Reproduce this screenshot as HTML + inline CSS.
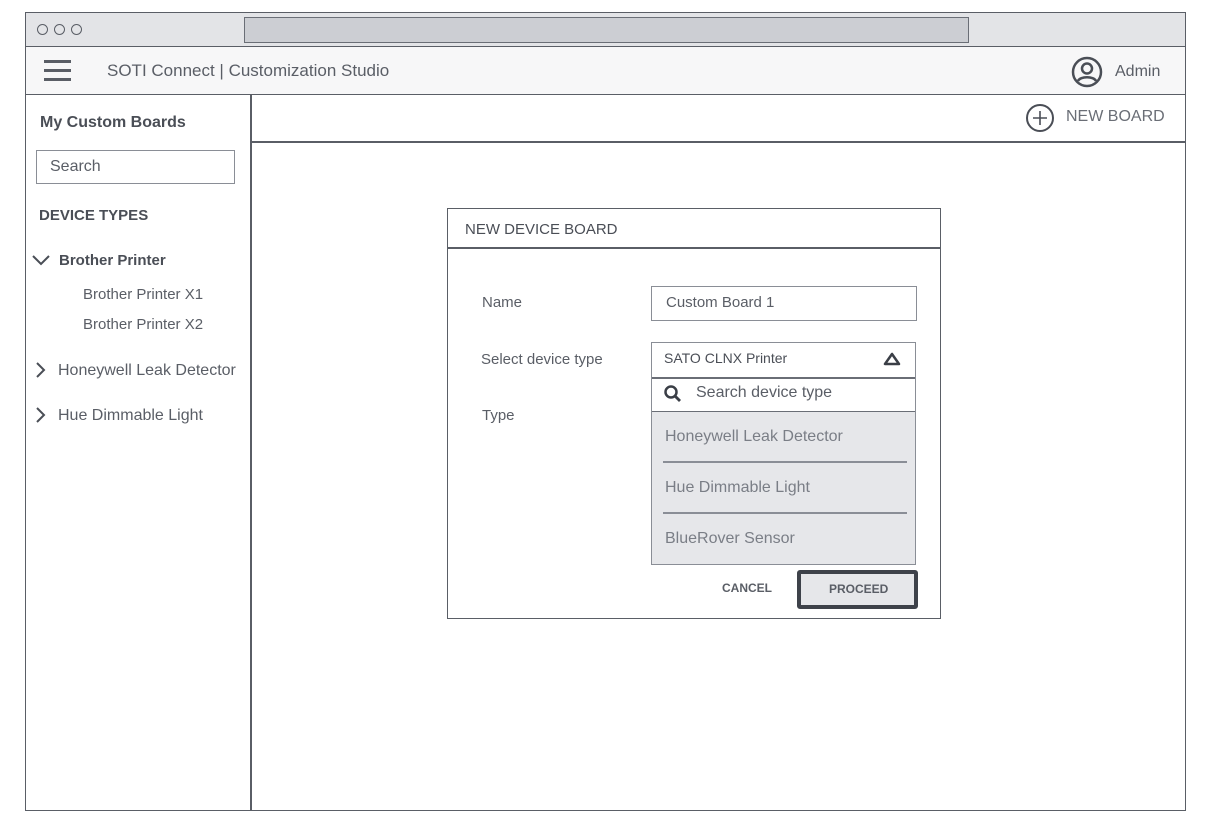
<!DOCTYPE html>
<html><head><style>
*{box-sizing:border-box;margin:0;padding:0}
body{width:1214px;height:836px;background:#fff;font-family:"Liberation Sans",sans-serif;color:#555a63;position:relative;overflow:hidden}
.a{position:absolute}
.t{position:absolute;white-space:nowrap}
</style></head><body>
<div class="a" style="left:25px;top:12px;width:1161px;height:799px;border:1.5px solid #5a5e66"></div>
<div class="a" style="left:26px;top:13px;width:1159px;height:34px;background:#e3e4e7;border-bottom:1.5px solid #5a5e66"></div>
<div class="a" style="left:37px;top:24px;width:11px;height:11px;border:1.5px solid #5a5e66;border-radius:50%"></div>
<div class="a" style="left:54px;top:24px;width:11px;height:11px;border:1.5px solid #5a5e66;border-radius:50%"></div>
<div class="a" style="left:71px;top:24px;width:11px;height:11px;border:1.5px solid #5a5e66;border-radius:50%"></div>
<div class="a" style="left:244px;top:17px;width:725px;height:26px;background:#ccced3;border:1.5px solid #6a6e76"></div>
<div class="a" style="left:26px;top:47px;width:1159px;height:48px;background:#f7f7f8;border-bottom:1.5px solid #5a5e66"></div>
<div class="a" style="left:44px;top:60px;width:27px;height:3px;background:#5a5e66"></div>
<div class="a" style="left:44px;top:69px;width:27px;height:3px;background:#5a5e66"></div>
<div class="a" style="left:44px;top:78px;width:27px;height:3px;background:#5a5e66"></div>
<div class="t" style="left:107px;top:61px;font-size:17px;color:#5a5e66">SOTI Connect | Customization Studio</div>
<svg class="a" style="left:1071px;top:56px" width="32" height="32" viewBox="0 0 32 32"><circle cx="16" cy="16" r="14" fill="none" stroke="#4a4e56" stroke-width="2.5"/><circle cx="16" cy="12.5" r="5" fill="none" stroke="#4a4e56" stroke-width="2.5"/><path d="M7 25c2-5 16-5 18 0" fill="none" stroke="#4a4e56" stroke-width="2.5"/></svg>
<div class="t" style="left:1115px;top:63px;font-size:16px;color:#5a5e66">Admin</div>
<div class="a" style="left:250px;top:95px;width:1.5px;height:715px;background:#5a5e66"></div>
<div class="a" style="left:251px;top:141px;width:934px;height:1.5px;background:#5a5e66"></div>
<svg class="a" style="left:1024px;top:103px" width="32" height="30" viewBox="0 0 32 30"><circle cx="16" cy="15" r="13" fill="none" stroke="#4a4e56" stroke-width="2"/><path d="M16 8v14M9 15h14" stroke="#4a4e56" stroke-width="1.6"/></svg>
<div class="t" style="left:1066px;top:108px;font-size:16px;color:#6a6e76">NEW BOARD</div>
<div class="t" style="left:40px;top:114px;font-size:16px;font-weight:bold;color:#4a4e56">My Custom Boards</div>
<div class="a" style="left:36px;top:150px;width:199px;height:34px;border:1.5px solid #8a8e96"></div>
<div class="t" style="left:50px;top:158px;font-size:16px;color:#5a5e66">Search</div>
<div class="t" style="left:39px;top:207px;font-size:15px;font-weight:bold;color:#4a4e56">DEVICE TYPES</div>
<svg class="a" style="left:31px;top:253px" width="20" height="14"><path d="M2 3l8 8 8-8" fill="none" stroke="#4a4e56" stroke-width="2"/></svg>
<div class="t" style="left:59px;top:252px;font-size:15px;font-weight:bold;color:#4a4e56">Brother Printer</div>
<div class="t" style="left:83px;top:286px;font-size:15px;color:#5a5e66">Brother Printer X1</div>
<div class="t" style="left:83px;top:316px;font-size:15px;color:#5a5e66">Brother Printer X2</div>
<svg class="a" style="left:34px;top:361px" width="14" height="18"><path d="M3 2l7 7-7 7" fill="none" stroke="#4a4e56" stroke-width="2"/></svg>
<div class="t" style="left:58px;top:362px;font-size:16px;color:#5a5e66">Honeywell Leak Detector</div>
<svg class="a" style="left:34px;top:406px" width="14" height="18"><path d="M3 2l7 7-7 7" fill="none" stroke="#4a4e56" stroke-width="2"/></svg>
<div class="t" style="left:58px;top:407px;font-size:16px;color:#5a5e66">Hue Dimmable Light</div>
<div class="a" style="left:447px;top:208px;width:494px;height:411px;border:1.5px solid #5a5e66"></div>
<div class="a" style="left:448px;top:247px;width:492px;height:1.5px;background:#5a5e66"></div>
<div class="t" style="left:465px;top:221px;font-size:15px;color:#4a4e56">NEW DEVICE BOARD</div>
<div class="t" style="left:482px;top:294px;font-size:15px;color:#5a5e66">Name</div>
<div class="a" style="left:651px;top:286px;width:266px;height:35px;border:1.5px solid #8a8e96"></div>
<div class="t" style="left:666px;top:294px;font-size:15px;color:#5a5e66">Custom Board 1</div>
<div class="t" style="left:481px;top:351px;font-size:15px;color:#5a5e66">Select device type</div>
<div class="t" style="left:482px;top:407px;font-size:15px;color:#5a5e66">Type</div>
<div class="a" style="left:651px;top:342px;width:265px;height:223px;border:1.5px solid #8a8e96;background:#e6e7ea"></div>
<div class="a" style="left:652px;top:343px;width:263px;height:69px;background:#fff;border-bottom:1.5px solid #6a6e76"></div>
<div class="a" style="left:652px;top:377px;width:263px;height:1.5px;background:#6a6e76"></div>
<div class="t" style="left:664px;top:350px;font-size:14px;color:#4a4e56">SATO CLNX Printer</div>
<svg class="a" style="left:883px;top:352px" width="18" height="14"><path d="M9 2L2 12h14z" fill="none" stroke="#3a3e46" stroke-width="2.5" stroke-linejoin="round"/></svg>
<svg class="a" style="left:663px;top:384px" width="20" height="20"><circle cx="8" cy="8" r="5.5" fill="none" stroke="#3a3e46" stroke-width="2.5"/><path d="M12 12l5 5" stroke="#3a3e46" stroke-width="2.8"/></svg>
<div class="t" style="left:696px;top:384px;font-size:16px;color:#5a5e66">Search device type</div>
<div class="t" style="left:665px;top:428px;font-size:16px;color:#7a7e86">Honeywell Leak Detector</div>
<div class="a" style="left:663px;top:461px;width:244px;height:1.5px;background:#8a8e96"></div>
<div class="t" style="left:665px;top:479px;font-size:16px;color:#7a7e86">Hue Dimmable Light</div>
<div class="a" style="left:663px;top:512px;width:244px;height:1.5px;background:#8a8e96"></div>
<div class="t" style="left:665px;top:530px;font-size:16px;color:#7a7e86">BlueRover Sensor</div>
<div class="t" style="left:722px;top:581px;font-size:12px;font-weight:bold;color:#5a5e66">CANCEL</div>
<div class="a" style="left:797px;top:570px;width:121px;height:39px;border:4px solid #3e424a;border-radius:3px;background:#e6e7ea"></div>
<div class="t" style="left:829px;top:582px;font-size:12px;font-weight:bold;color:#5a5e66">PROCEED</div>
</body></html>
